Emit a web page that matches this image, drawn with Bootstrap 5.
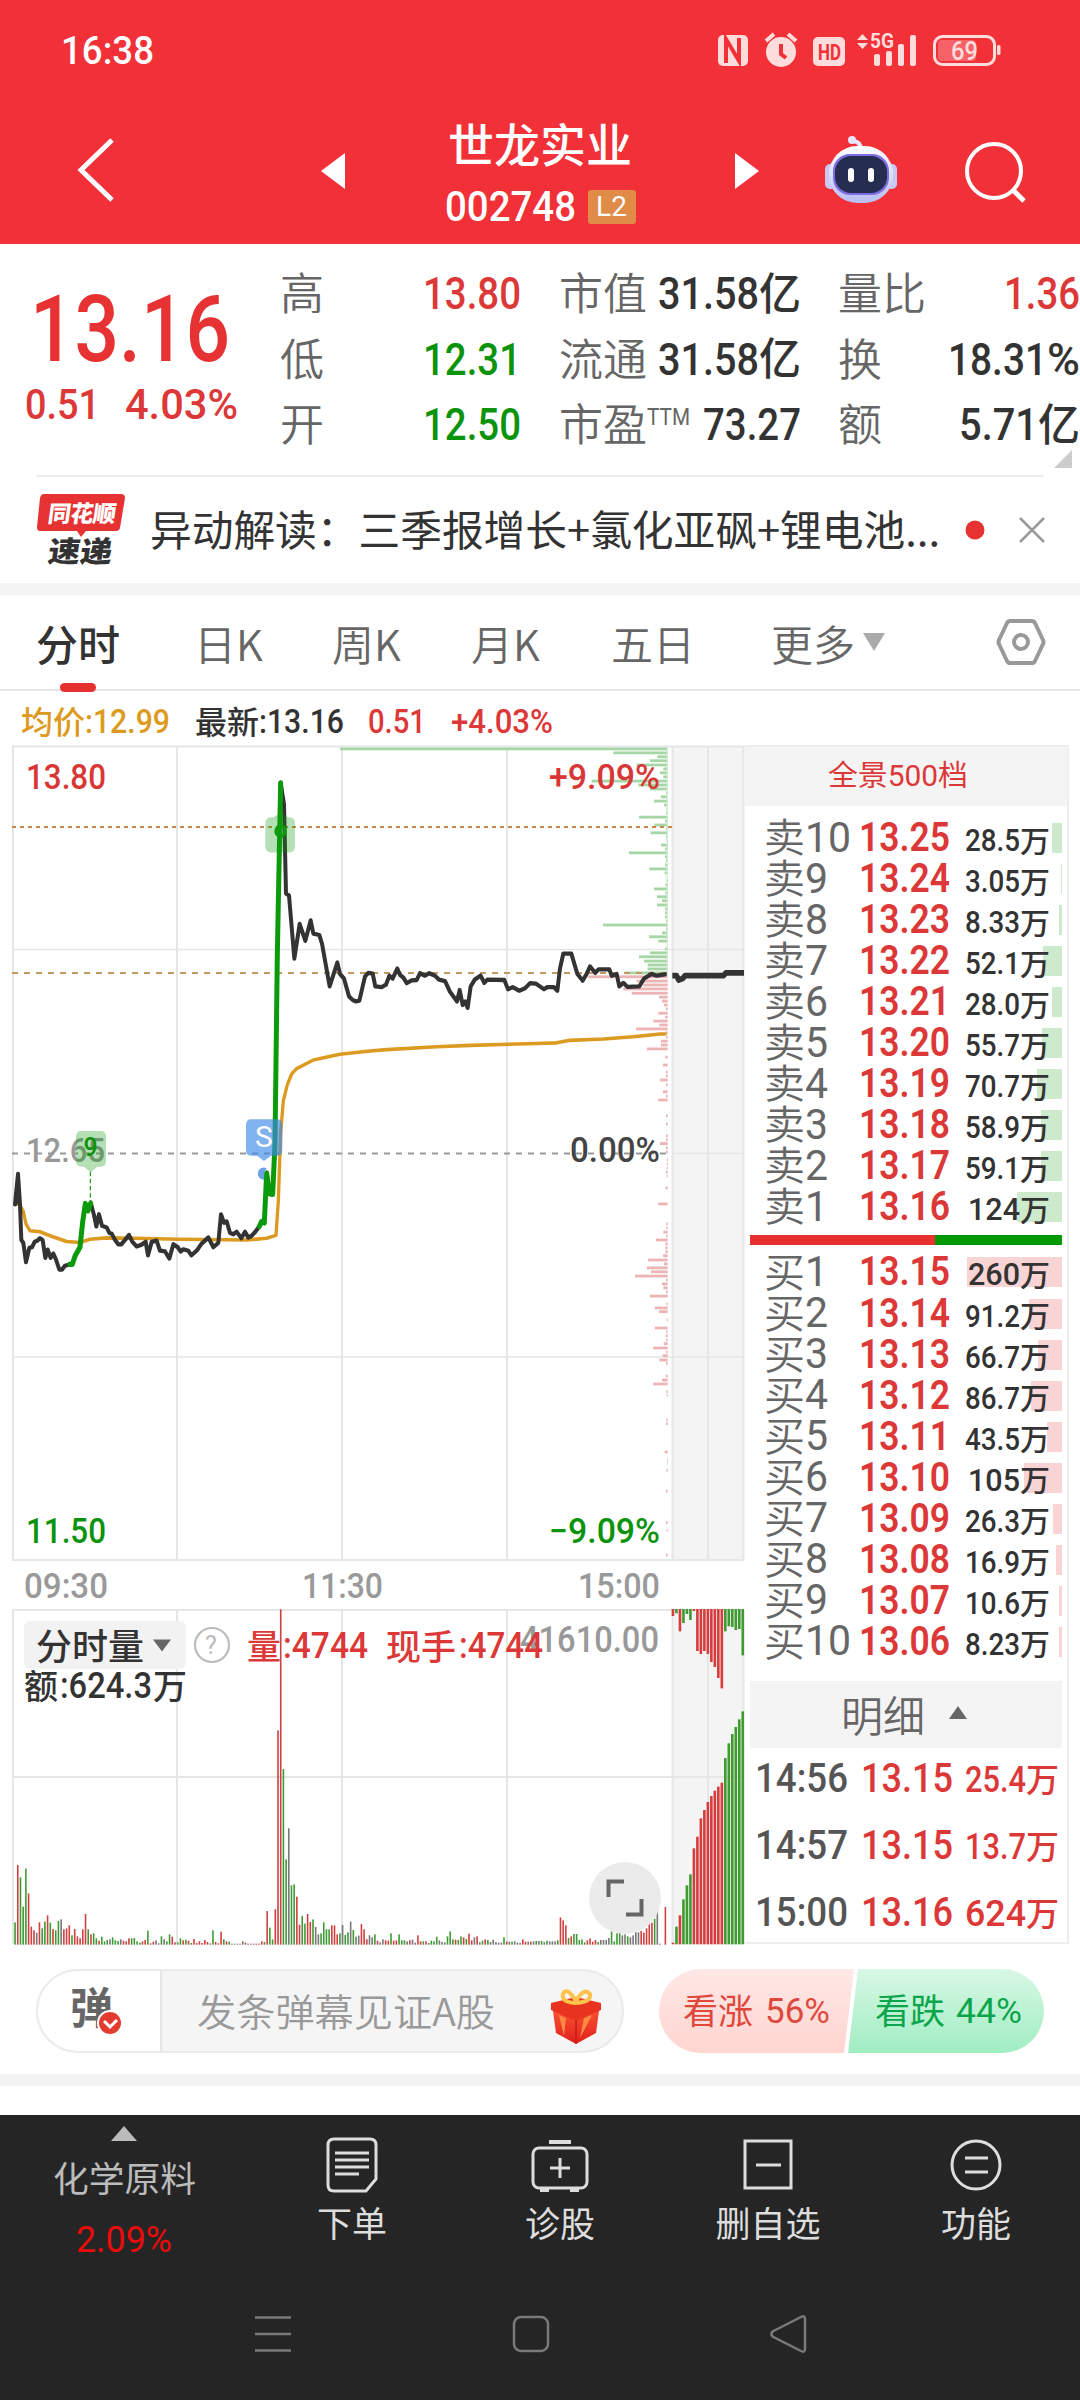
<!DOCTYPE html>
<html lang="zh-CN">
<head>
<meta charset="utf-8">
<meta name="viewport" content="width=device-width, initial-scale=1">
<title>世龙实业 002748</title>
<link rel="stylesheet" href="https://cdn.jsdelivr.net/npm/bootstrap@5.3.0/dist/css/bootstrap.min.css">
<style>
:root{--up:#dc3838;--down:#0b930b;--ink:#333;--mute:#666;--line:#e9e9e9}
body{width:1080px;height:2400px;overflow:hidden;background:#fff;color:var(--ink);font-family:Roboto,"Noto Sans CJK SC",sans-serif;line-height:1}
svg{display:block;flex:none;overflow:visible}
.cjk{font-family:"Noto Sans CJK SC",sans-serif;line-height:1}
.fit{display:inline-block;white-space:nowrap;transform-origin:0 50%;flex:none}
.num{font-family:Roboto,sans-serif;font-weight:500;line-height:1}
.up{color:var(--up)}.down{color:var(--down)}.mute{color:var(--mute)}
.topbar{height:244px;background:#f13037;color:#fff}
.statusbar{height:101px;padding:0 78px 0 61px}
.titlebar{height:143px;padding:0 54px 0 76px}
.lv{width:48px;height:34px;background:#e08c48;border-radius:3px;font-size:28px;margin-left:12px}
.quote{height:231px;padding-left:24px}
.quote-main{width:214px;padding-top:40px;margin-right:42px}
.quote-row{height:65.5px}
.quote-row .cjk{font-size:44px;font-weight:350;margin-top:-5px}
.quote-row .num{font-size:45px}
.corner{right:8px;top:206px}
.news{height:108px;margin:0 36px;border-top:2px solid #ececec}
.band{height:12px;background:#f4f4f4}
.tabs{height:96px;border-bottom:2px solid #e6e6e6;padding:0 34px 0 36px}
.tabs .cjk{font-size:42px;font-weight:350;color:var(--mute);margin-top:1px}
.tabs .chosen{font-weight:500;color:var(--ink)}
.tabmark{width:36px;height:9px;border-radius:5px;background:#e63030;left:24px;bottom:-28px}
.info{height:49px;padding:11px 0 0 21px;font-size:34px}
.info .cjk{font-size:32px;font-weight:500;margin-top:-3px}
.board{height:1206px}
.chart{width:745px}
.book{width:324px;height:1199px;margin-top:5px;border:2px solid #eee;border-left:0}
.book-head{height:59px;background:#f4f4f4}
.level{height:41.05px;padding-left:19px;padding-right:9px}
.level .lab{width:95px;font-size:42px;color:var(--mute)}
.level .price{width:101px}
.level .price .num{font-weight:600}
.level .vol{width:90px;justify-content:flex-end;z-index:1}
.depthbar{right:5px;top:6px;height:30px}
.sellbar{background:#cdeacc}.buybar{background:#f9d4d4}
.powerbar{height:10px;margin:8px 5px 6px}
.detail-head{height:67px;background:#f4f4f4;margin:19px 5px 0}
.tick{height:67px;padding-left:10px}
.talk{height:128px;padding:23px 35px 0 36px}
.talkbox{width:588px;height:84px;border:2px solid #eaeaea;border-radius:42px;background:#f5f5f5}
.talkmode{width:124px;background:#fff;border-right:2px solid #e6e6e6}
.bottom{height:285px;background:#252525;color:#ddd}
.toolcell{width:208px}
.toolcell .cjk{font-size:35px}
</style>
<script src="https://cdn.jsdelivr.net/npm/bootstrap@5.3.0/dist/js/bootstrap.bundle.min.js"></script>
</head>
<body>
<header class="topbar">
  <div class="statusbar d-flex justify-content-between align-items-center">
    <span class="num fit" data-w="93" style="font-size:38px">16:38</span>
    <svg width="287" height="40" viewBox="715 31 287 40" fill="#ffdcdc">
      <rect x="718" y="35" width="30" height="31" rx="5"/>
      <path d="M726 63V39l13 22V38" fill="none" stroke="#f13037" stroke-width="4"/>
      <circle cx="781" cy="52" r="15"/><path d="M766 41l8-7M796 41l-8-7" stroke="#ffdcdc" stroke-width="4"/><path d="M781 44v10l5 4" fill="none" stroke="#f13037" stroke-width="4"/>
      <rect x="813" y="37" width="32" height="29" rx="5"/>
      <text x="818" y="60" font-family="Roboto" font-weight="700" font-size="22" fill="#f13037" textLength="23" lengthAdjust="spacingAndGlyphs">HD</text>
      <path d="M857 40l5.500-6 5.500 6zM857 43h11l-5.500 6z"/>
      <text x="870" y="48" font-family="Roboto" font-weight="700" font-size="20" textLength="24" lengthAdjust="spacingAndGlyphs">5G</text>
      <rect x="874" y="54" width="6" height="12" rx="2"/><rect x="886" y="51" width="6" height="15" rx="2"/><rect x="898" y="44" width="6" height="22" rx="2"/><rect x="910" y="35" width="6" height="31" rx="2"/>
      <rect x="934.500" y="36.500" width="60" height="28" rx="8" fill="none" stroke="#ffdcdc" stroke-width="3"/><rect x="938" y="40" width="38" height="21" rx="4" opacity=".3"/><rect x="997" y="45" width="3.500" height="10" rx="1.500"/>
      <text x="951" y="60" font-family="Roboto" font-weight="500" font-size="25" textLength="27" lengthAdjust="spacingAndGlyphs">69</text>
    </svg>
  </div>
  <div class="titlebar d-flex align-items-center">
    <svg width="40" height="70" viewBox="0 0 40 70" fill="none" stroke="#fff" stroke-width="5" style="margin-top:-6px"><path d="M36 5L5 35l31 30"/></svg>
    <div class="d-flex align-items-center" style="margin-left:205px">
      <svg width="24" height="36" viewBox="0 0 24 36" fill="#fff" style="margin-top:-3px"><path d="M24 0v36L0 18z"/></svg>
      <div class="d-flex flex-column align-items-center" style="width:390px">
        <span class="cjk" style="font-size:46px;font-weight:500;margin-top:2px">世龙实业</span>
        <div class="d-flex align-items-center" style="margin-top:21px"><span class="num fit" data-w="131" style="font-size:42px">002748</span><span class="lv d-flex align-items-center justify-content-center">L2</span></div>
      </div>
      <svg width="24" height="36" viewBox="0 0 24 36" fill="#fff" style="margin-top:-3px"><path d="M0 0v36l24-18z"/></svg>
    </div>
    <svg width="76" height="76" viewBox="823 132 76 76" style="margin:-4px 0 0 64px">
      <defs><linearGradient id="bot" x2="0" y2="1"><stop stop-color="#fff"/><stop offset="1" stop-color="#b9bdf0"/></linearGradient></defs>
      <path d="M861 148q0-7-8-8" fill="none" stroke="#e8e6fa" stroke-width="4"/><circle cx="852" cy="139" r="4" fill="#e8e6fa"/>
      <rect x="825" y="163" width="12" height="25" rx="5" fill="#c9c8f3"/><rect x="885" y="163" width="12" height="25" rx="5" fill="#c9c8f3"/>
      <rect x="829" y="145" width="64" height="57" rx="28" fill="url(#bot)"/>
      <rect x="833" y="153" width="56" height="41" rx="17" fill="#7d6de0"/><rect x="835" y="155" width="52" height="37" rx="16" fill="#252d50"/>
      <rect x="848" y="167" width="6" height="14" rx="3" fill="#fff"/><rect x="868" y="167" width="6" height="14" rx="3" fill="#fff"/>
    </svg>
    <svg class="ms-auto" width="62" height="62" viewBox="964 141 62 62" fill="none" stroke="#fff" stroke-width="4" style="margin-top:-2px"><circle cx="994" cy="171" r="27"/><path d="M1013 190l11 11" stroke-width="5"/></svg>
  </div>
</header>

<section class="quote d-flex position-relative">
  <div class="quote-main">
    <div style="padding-left:6px"><span class="num fit" data-w="200" style="font-size:92px;color:#e63232">13.16</span></div>
    <div class="d-flex justify-content-between" style="padding:7px 0 0 1px"><span class="num up fit" data-w="75" style="font-size:43px">0.51</span><span class="num up fit" data-w="113" style="font-size:43px">4.03%</span></div>
  </div>
  <div style="width:279px;padding-top:17px" class="q" data-col="0"></div>
  <div style="width:279px;padding-top:17px" class="q" data-col="1"></div>
  <div style="width:242px;padding-top:17px" class="q" data-col="2"></div>
  <svg class="position-absolute corner" width="18" height="18"><path d="M18 0v18H0z" fill="#ccc"/></svg>
</section>

<section class="news d-flex align-items-center">
  <svg width="90" height="80" viewBox="36 489 90 80" font-family="Noto Sans CJK SC" font-weight="900">
    <path d="M44 493h77q4 0 4 4l-5 30q-1 3-4 3H86l-5 6-4-6H40q-3 0-3-4l3-29q1-4 4-4z" fill="#e63232"/>
    <g transform="translate(47 521) skewX(-8)"><text font-size="23" fill="#fff" textLength="68">同花顺</text></g>
    <g transform="translate(47 561) skewX(-8)"><text font-size="29" fill="#333" textLength="64" lengthAdjust="spacingAndGlyphs">速递</text></g>
  </svg>
  <span class="cjk fit" data-w="790" style="font-size:42px;margin:-4px 0 0 24px;">异动解读：三季报增长+氯化亚砜+锂电池...</span>
  <svg width="20" height="20" style="margin-left:25px"><circle cx="10" cy="10" r="9.500" fill="#e63232"/></svg>
  <svg width="26" height="26" viewBox="0 0 26 26" stroke="#999" stroke-width="2.500" style="margin-left:34px"><path d="M1 1l24 24M25 1L1 25"/></svg>
</section>
<div class="band"></div>

<nav class="tabs d-flex align-items-center">
  <span class="cjk chosen position-relative" style="width:158px">分时<i class="position-absolute tabmark"></i></span>
  <span class="cjk" style="width:138px">日K</span>
  <span class="cjk" style="width:139px">周K</span>
  <span class="cjk" style="width:140px">月K</span>
  <span class="cjk" style="width:160px">五日</span>
  <span class="cjk">更多</span>
  <svg width="22" height="18" style="margin-left:8px"><path d="M0 0h22L11 18z" fill="#aaa"/></svg>
  <svg class="ms-auto" width="50" height="48" viewBox="0 0 50 48" fill="none" stroke="#999" stroke-width="4"><path d="M14 3h22q2 0 3 2l8 17q1 2 0 4l-8 17q-1 2-3 2H14q-2 0-3-2L3 26q-1-2 0-4l8-17q1-2 3-2z"/><circle cx="25" cy="24" r="7"/></svg>
</nav>

<div class="info d-flex align-items-center">
  <span class="cjk fit" data-w="64" style="color:#dc9b20">均价</span><span class="num fit" data-w="85" style="color:#dc9b20">:12.99</span>
  <span class="cjk fit" data-w="64" style="margin-left:25px">最新</span><span class="num fit" data-w="85">:13.16</span>
  <span class="num up fit" data-w="58" style="margin-left:24px">0.51</span>
  <span class="num up fit" data-w="102" style="margin-left:25px">+4.03%</span>
</div>

<main class="board d-flex">
  <svg class="chart" width="745" height="1206" viewBox="0 740 745 1206" font-family="Roboto,'Noto Sans CJK SC',sans-serif" font-weight="500">
    <rect x="672" y="747" width="72" height="813" fill="#f4f4f4"/><rect x="672" y="1609" width="72" height="335" fill="#f4f4f4"/>
    <g stroke="#e6e6e6" stroke-width="2" fill="none">
      <path d="M12 746.500H744M12 1560H744M13 746V1560M177 746V1560M342 746V1560M507 746V1560M672.500 746V1560M708 746V1560M743.500 746V1560"/>
      <path d="M12 1610H744M12 1777H744M13 1610V1944M177 1610V1944M342 1610V1944M507 1610V1944M672.500 1610V1944M708 1610V1944M743.500 1610V1944"/>
      <path d="M12 949.500H744M12 1357H744M672 1153.500H744" stroke-width="1.300"/>
    </g>
    <g id="depth"></g>
    <path d="M12 827H672" stroke="#cc8844" stroke-width="2" stroke-dasharray="4 4"/>
    <path d="M12 973H664" stroke="#c29a62" stroke-width="2" stroke-dasharray="6 6"/>
    <path d="M12 1153.500H666" stroke="#999" stroke-width="2" stroke-dasharray="6 6"/>
    <text x="26" y="1162" font-size="34" fill="#999" textLength="79" lengthAdjust="spacingAndGlyphs">12.65</text>
    <g transform="translate(0 740) scale(.33333 .35714)" fill="none" stroke-linejoin="round" stroke-linecap="round">
      <path id="avg" stroke="#dc9b20" stroke-width="10" d="M45 1300H58L70 1320 78 1355 90 1374 120 1377 150 1388 200 1404 240 1407 270 1398 320 1394 400 1395 540 1398 740 1400 800 1395 828 1387 835 1290 842 1100 850 1010 862 965 875 935 890 920 940 896 1020 880 1110 871 1160 867 1310 859 1410 855 1610 850 1670 848 1710 841 1810 837 1900 831 1980 823 1995 823"/>
      <path d="M45 1300L54 1215 60 1300z" fill="#333"/>
      <path stroke="#333" stroke-width="12" d="M45 1300L54 1215 60 1300 64 1400 70 1408 78 1462 88 1422 96 1420 104 1405 112 1402 120 1395 128 1400 136 1450 143 1427 152 1450 160 1438 168 1455 178 1483 186 1483 195 1472 210 1468M272 1295L282 1330 289 1362 297 1328 306 1360 320 1365 328 1380 335 1382 345 1400 355 1412 364 1412 375 1400 387 1386 397 1405 410 1418 425 1413 437 1405 444 1443 455 1405 470 1402 480 1430 495 1432 508 1452 520 1412 533 1420 542 1432 550 1426 565 1430 574 1443 590 1430 605 1410 625 1393 640 1420 655 1408 663 1328 672 1352 680 1348 690 1380 700 1384 710 1377 724 1395 735 1377 745 1393 755 1388 765 1378 778 1362M842 120L852 180 858 430 867 435 883 612 899 515 916 562 932 505 940 542 958 546 966 570 989 690 1012 623 1020 655 1032 668 1047 718 1058 728 1068 732 1078 730 1095 662 1105 652 1118 654 1126 690 1145 692 1158 685 1168 660 1178 668 1192 640 1200 658 1210 665 1220 681 1235 673 1250 672 1260 653 1275 660 1288 653 1305 660 1317 671 1335 675 1350 705 1371 732 1379 700 1388 742 1396 732 1403 750 1412 690 1425 670 1442 660 1453 680 1462 671 1513 672 1524 698 1538 692 1558 702 1575 695 1590 681 1607 682 1632 698 1642 692 1662 692 1672 702 1680 640 1690 598 1714 598 1732 655 1748 674 1760 655 1770 634 1786 652 1796 642 1828 642 1835 660 1850 655 1858 690 1870 680 1882 691 1918 690 1932 668 1955 655 1970 660 1995 656"/>
      <path stroke="#333" stroke-width="16" stroke-linecap="butt" d="M2017 660H2030L2036 672 2048 668 2055 660H2170L2178 652H2232"/>
      <rect x="796" y="216" width="89" height="99" rx="16" fill="#09980a" fill-opacity=".3"/><path d="M820 217l22-14 22 14z" fill="#09980a" fill-opacity=".3"/>
      <path stroke="#0b9a0b" stroke-width="15" d="M210 1468H217L225 1445 240 1420 248 1350 256 1298 264 1318 272 1298M778 1362L785 1348 793 1352 800 1212 808 1270 818 1272 825 1130 832 600 842 120"/>
      <circle cx="842" cy="255" r="14" stroke="#0b9a0b" stroke-width="10"/>
      <path d="M271 1210V1292" stroke="#0b9a0b" stroke-width="3.500" stroke-dasharray="10 10"/>
      <path d="M244 1095h58q16 0 16 16v68q0 16-16 16h-10l-20 16-20-16h-8q-16 0-16-16v-68q0-16 16-16z" fill="#09980a" fill-opacity=".3"/>
      <path d="M754 1062h77q16 0 16 16v70q0 16-16 16h-18l-21 15-21-15h-17q-16 0-16-16v-70q0-16 16-16z" fill="#3c88e8" fill-opacity=".65"/>
      <path d="M800 1200A17 17 0 1 0 792 1231V1210z" fill="#69a2e6"/>
    </g>
    <text x="83.500" y="1156" font-size="25" fill="#0b930b">9</text>
    <text x="255" y="1147" font-size="30" fill="#fff" font-weight="400">S</text>
    <g font-size="35">
      <text x="26" y="789" fill="#d93636" textLength="80" lengthAdjust="spacingAndGlyphs">13.80</text>
      <text x="549" y="789" fill="#d93636" textLength="111" lengthAdjust="spacingAndGlyphs">+9.09%</text>
      <text x="570" y="1162" fill="#444" textLength="90" lengthAdjust="spacingAndGlyphs">0.00%</text>
      <text x="26" y="1543" fill="#0b930b" textLength="80" lengthAdjust="spacingAndGlyphs">11.50</text>
      <text x="549" y="1543" fill="#0b930b" textLength="111" lengthAdjust="spacingAndGlyphs">−9.09%</text>
      <text x="24" y="1598" fill="#999" textLength="84" lengthAdjust="spacingAndGlyphs">09:30</text>
      <text x="302" y="1598" fill="#999" textLength="81" lengthAdjust="spacingAndGlyphs">11:30</text>
      <text x="578" y="1598" fill="#999" textLength="82" lengthAdjust="spacingAndGlyphs">15:00</text>
    </g>
    <g id="vol"></g>
    <rect x="24" y="1621" width="162" height="48" rx="6" fill="#f2f2f2"/>
    <text x="36" y="1660" font-size="36" fill="#333" textLength="108">分时量</text><path d="M153 1639.500h18l-9 12z" fill="#666"/>
    <circle cx="212" cy="1645" r="17" fill="none" stroke="#bbb" stroke-width="2.200"/><text x="205" y="1654" font-size="25" font-weight="400" fill="#bbb">?</text>
    <g font-size="36" fill="#dc3838"><text x="247" y="1659" font-size="34">量</text><text x="283" y="1658" textLength="85" lengthAdjust="spacingAndGlyphs">:4744</text></g>
    <text x="520" y="1652" font-size="36" fill="#999" textLength="139" lengthAdjust="spacingAndGlyphs">41610.00</text>
    <g font-size="36" fill="#dc3838"><text x="386" y="1660" font-size="35">现手</text><text x="459" y="1658" textLength="84" lengthAdjust="spacingAndGlyphs">:4744</text></g>
    <g font-size="36" fill="#333"><text x="24" y="1699" font-size="34">额</text><text x="60" y="1698" textLength="92" lengthAdjust="spacingAndGlyphs">:624.3</text><text x="153" y="1699" font-size="34">万</text></g>
    <circle cx="625" cy="1898" r="36" fill="#ebebeb"/>
    <path d="M608.500 1897V1881.500H624M641.500 1899V1914.500H626" fill="none" stroke="#666" stroke-width="4"/>
  </svg>

  <aside class="book">
    <div class="book-head d-flex align-items-center justify-content-center"><span class="fit up" data-w="140" style="font-size:29px;margin-right:16px">全景500档</span></div>
    <div id="sells" style="padding-top:11px"></div>
    <div class="powerbar d-flex"><div style="width:185px;background:#e83030"></div><div class="flex-fill" style="background:#009a00"></div></div>
    <div id="buys"></div>
    <div class="detail-head d-flex align-items-center justify-content-center"><span class="cjk mute" style="font-size:42px;font-weight:350;margin:-1px 0 0 -4px">明细</span><svg width="18" height="13" style="margin:-4px 0 0 24px"><path d="M0 13h18L9 0z" fill="#666"/></svg></div>
    <div id="ticks" style="margin-top:-3px"></div>
  </aside>
</main>

<section class="talk d-flex justify-content-between">
  <div class="talkbox d-flex align-items-center overflow-hidden">
    <div class="talkmode h-100 d-flex align-items-center justify-content-center">
      <svg width="60" height="56" viewBox="70 1982 60 56"><text x="71" y="2023" font-family="Noto Sans CJK SC" font-weight="700" font-size="43" fill="#666">弹</text><circle cx="111" cy="2022" r="12" fill="#e43b30" stroke="#fff" stroke-width="2"/><path d="M105 2020l6 6 7-7" fill="none" stroke="#fff" stroke-width="3"/></svg>
    </div>
    <span class="cjk fit" data-w="298" style="font-size:38px;font-weight:350;color:#999;margin:-2px 0 0 35px">发条弹幕见证A股</span>
    <svg width="56" height="60" viewBox="548 1988 56 60" style="margin:9px 0 0 53px">
      <defs><linearGradient id="box" x2="0" y2="1"><stop stop-color="#ff5a35"/><stop offset="1" stop-color="#e0201c"/></linearGradient></defs>
      <path d="M552 2006l24 10v30l-20-11zM600 2006l-24 10v30l20-11z" fill="url(#box)"/><path d="M551 2005l25-6 25 6v7l-25 11-25-11z" fill="#e8331f"/><path d="M576 2022v24" stroke="#c41c18" stroke-width="1.500"/><path d="M559 2017l7 3-2 18zM592 2017l-8 3-4 20z" fill="#ff8a45"/>
      <path d="M575 2005q-14-1-12-9 4-8 13 7 8-14 14-7 2 8-15 9z" fill="none" stroke="#ffc24a" stroke-width="4"/>
    </svg>
  </div>
  <svg width="386" height="84" viewBox="660 1969 386 84">
    <defs><linearGradient id="bull" x2="0" y2="1"><stop stop-color="#ffe8e6"/><stop offset="1" stop-color="#ffd5d0"/></linearGradient><linearGradient id="bear" x2="0" y2="1"><stop stop-color="#d8f8e5"/><stop offset="1" stop-color="#a0edc2"/></linearGradient></defs>
    <path d="M702 1969H855L845 2053H702A42 42 0 0 1 702 1969z" fill="url(#bull)"/><path d="M859 1969H1003A42 42 0 0 1 1003 2053H849z" fill="url(#bear)"/>
    <g font-family="Roboto,'Noto Sans CJK SC'" font-size="35"><g fill="#e0483c"><text x="684" y="2024">看涨</text><text x="766" y="2023" textLength="65" lengthAdjust="spacingAndGlyphs">56%</text></g><g fill="#0da54c"><text x="876" y="2024">看跌</text><text x="957" y="2023" textLength="66" lengthAdjust="spacingAndGlyphs">44%</text></g></g>
  </svg>
</section>
<div class="band"></div>
<div style="height:29px"></div>

<footer class="bottom">
  <div class="d-flex" style="height:145px">
    <div class="toolcell d-flex flex-column align-items-center" style="width:248px;padding-top:11px">
      <svg width="26" height="15"><path d="M0 15h26L13 0z" fill="#bbb"/></svg>
      <span class="cjk fit" data-w="143" style="color:#bbb;margin-top:18px">化学原料</span>
      <span class="fit" data-w="96" style="font-size:37px;color:#e80c0c;margin-top:27px">2.09%</span>
    </div>
    <div class="toolcell d-flex flex-column align-items-center" style="padding-top:22px">
      <svg width="52" height="56" viewBox="0 0 52 56" fill="none" stroke="#ddd" stroke-width="3"><path d="M8 2h36q6 0 6 6v34L40 54H8q-6 0-6-6V8q0-6 6-6z"/><path d="M9 16h34M9 23h34M9 30h34M9 37h24"/></svg>
      <span class="cjk" style="margin-top:11px">下单</span>
    </div>
    <div class="toolcell d-flex flex-column align-items-center" style="padding-top:22px">
      <svg width="60" height="56" viewBox="0 0 60 56" fill="none" stroke="#ddd" stroke-width="3"><path d="M19 5h22M10 53h9M40 53h9" stroke-width="4"/><rect x="3" y="11" width="54" height="40" rx="6"/><path d="M20 31h20M30 21v20"/></svg>
      <span class="cjk" style="margin-top:11px">诊股</span>
    </div>
    <div class="toolcell d-flex flex-column align-items-center" style="padding-top:22px">
      <svg width="52" height="56" viewBox="0 0 52 56" fill="none" stroke="#ddd" stroke-width="3"><rect x="3" y="4" width="46" height="47"/><path d="M14 28h25"/></svg>
      <span class="cjk" style="margin-top:11px">删自选</span>
    </div>
    <div class="toolcell d-flex flex-column align-items-center" style="padding-top:22px">
      <svg width="52" height="56" viewBox="0 0 52 56" fill="none" stroke="#ddd" stroke-width="3"><circle cx="26" cy="28" r="24"/><path d="M15 21h23M15 35h23"/></svg>
      <span class="cjk" style="margin-top:11px">功能</span>
    </div>
  </div>
  <svg width="1080" height="110" viewBox="0 2260 1080 110" fill="none" stroke="#7a7a7a" stroke-width="2.500"><path d="M255 2317.500h36M255 2334h36M255 2350.500h36"/><rect x="514" y="2317" width="34" height="34" rx="7"/><path d="M772.500 2331.500L801 2317q4-2 4 2v30q0 4-4 2l-28.500-14.500q-2-2.500 0-5z"/></svg>
</footer>

<script>
const quote=[
 [['高',241,'13.80',98,'up'],['低',241,'12.31',98,'down'],['开',241,'12.50',98,'down']],
 [['市值',242,'31.58',101,'','亿'],['流通',242,'31.58',101,'','亿'],['市盈',242,'73.27',98,'','','TTM']],
 [['量比',242,'1.36',76,'up'],['换',242,'18.31',99,'','%'],['额',242,'5.71',79,'','亿']]];
document.querySelectorAll('.q').forEach(col=>{
  col.innerHTML=quote[col.dataset.col].map(([l,w,v,vw,c,u,sup])=>`<div class="quote-row d-flex align-items-center" style="width:${w}px"><span class="cjk mute">${l}</span>${sup?`<span class="fit mute" data-w="43" style="font-size:24px;margin-top:-15px">${sup}</span>`:''}<span class="num fit ms-auto ${c}" data-w="${vw}">${v}</span>${u==='%'?'<span class="num fit" data-w="33">%</span>':u?`<span class="cjk fit" data-w="42" style="font-weight:500;margin-top:-6px">${u}</span>`:''}</div>`).join('')});

const sells=[['13.25','28.5',10],['13.24','3.05',1],['13.23','8.33',3],['13.22','52.1',19],['13.21','28.0',10],['13.20','55.7',20],['13.19','70.7',25],['13.18','58.9',21],['13.17','59.1',21],['13.16','124',45]];
const buys=[['13.15','260',95],['13.14','91.2',33],['13.13','66.7',24],['13.12','86.7',31],['13.11','43.5',15],['13.10','105',38],['13.09','26.3',9],['13.08','16.9',6],['13.07','10.6',3],['13.06','8.23',3]];
const level=(name,n,[p,v,w],cls)=>`<div class="level d-flex align-items-center position-relative"><span class="lab d-flex align-items-center"><span class="cjk fit" data-w="41" style="font-size:40px;font-weight:350;margin-top:-5px">${name}</span><span class="fit" data-w="${n>9?46:23}">${n}</span></span><span class="price"><span class="num fit up" data-w="91" style="font-size:41px">${p}</span></span><i class="position-absolute depthbar ${cls}" style="width:${w}px"></i><span class="vol d-flex align-items-center"><span class="num fit" data-w="${v.length>3?55:52}" style="font-size:32px;margin-top:5px">${v}</span><span class="cjk fit" data-w="30" style="font-size:30px;font-weight:500;margin-top:2px">万</span></span></div>`;
document.getElementById('sells').innerHTML=sells.map((r,i)=>level('卖',10-i,r,'sellbar')).join('');
document.getElementById('buys').innerHTML=buys.map((r,i)=>level('买',i+1,r,'buybar')).join('');
document.getElementById('ticks').innerHTML=[['14:56','13.15','25.4'],['14:57','13.15','13.7'],['15:00','13.16','624']].map(([t,p,v])=>`<div class="tick d-flex align-items-center"><span class="num fit" data-w="93" style="font-size:41px;color:#555">${t}</span><span class="num fit up" data-w="92" style="font-size:41px;margin-left:13px">${p}</span><span class="num fit up" data-w="61" style="font-size:36px;margin:3px 0 0 12px">${v}</span><span class="cjk fit up" data-w="33" style="font-size:33px;font-weight:500">万</span></div>`).join('');

document.querySelectorAll('.fit').forEach(e=>{const n=e.getBoundingClientRect().width,w=+e.dataset.w;e.style.width=w+'px';e.style.transform=`scaleX(${w/n})`});

/* order depth along the price axis: offset,left edge */
const third=n=>n/3;
const asks='25,-90 36,730 47,862 58,840 70,800 81,880 92,870 103,880 115,665 126,805 137,840 148,888 159,873 171,852 182,882 193,890 204,888 216,807 227,885 238,853 249,888 260,842 271,888 282,890 294,873 305,885 316,777 327,885 338,888 350,885 361,838 372,884 395,890 406,886 417,852 428,886 439,861 450,876 462,861 473,885 484,885 495,885 507,888 518,699 529,888 540,876 551,837 563,865 585,885 596,840 607,807 619,822 630,833 641,833 652,765';
const bids='663,655 675,800 686,820 697,760 709,785 720,867 731,876 742,882 753,888 765,865 776,885 787,850 798,868 809,798 820,885 832,888 843,873 854,873 865,831 888,886 910,879 930,888 941,888 952,870 965,888 985,879 997,888 1008,865 1052,888 1075,888 1108,888 1119,888 1130,870 1142,888 1153,888 1175,890 1187,890 1198,890 1210,888 1221,890 1254,886 1299,865 1355,889 1366,889 1378,880 1389,889 1400,858 1411,886 1422,886 1433,886 1444,879 1456,834 1467,882 1478,831 1489,843 1501,795 1512,888 1523,876 1534,880 1545,888 1557,840';
const lowBids='1692,889 1704,854 1715,867 1740,890 1764,854 1775,889 1787,887 1800,889 1811,881 1824,850 1836,889 1847,878 1860,868 1870,888 1908,887 1920,876 1932,850 1955,889 1966,890 2040,889 2051,888 2136,884 2160,891 2170,891 2191,889 2253,888 2348,888 2371,890 2445,888';
const hbar=(s,c,k)=>s.split(' ').map(p=>{const[y,x]=p.split(',');return`<rect x="${370+third(x)}" y="${740+y/k-1.4}" width="${third(893-x)}" height="2.8" fill="${c}"/>`}).join('');
document.getElementById('depth').innerHTML=hbar(asks,'#a6d5a6',2.8)+hbar(bids,'#ecb4b4',2.8)+hbar(lowBids,'#ecb4b4',3)+`<rect x="666.500" y="748" width="1.2" height="225" fill="#cdeacd"/>`;

/* minute turnover: top edge and direction */
const minutes='967g 795r 832g 920g 806g 880r 980r 991r 998x 967r 985g 965g 946r 968g 987r 991g 963g 958x 988r 985r 976r 1006g 987r 1009r 1015r 988r 942r 988g 1003r 1000g 1015g 1022r 1010g 1024g 1020g 1018x 1012g 1021g 1023g 1018x 1022r 1024r 1015r 1015g 1014g 1024g 1028g 1024r 1020r 992g 1030r 1025r 1021x 1030x 1009g 1018x 1024g 1003g 1010r 1027r 1027g 1015g 1021r 1019g 1022r 1029g 1017r 1029r 1024r 1029r 1020r 1026r 1030x 991g 1026r 1030r 995r 1018g 1024r 1025g 1031x 1031x 1031x 1031x 1024x 1028r 1031x 1031x 1031r 1031r 1031r 1024r 1026g 933r 983g 1018g 928r 391r 28r 507g 778g 685x 856g 853g 890r 974r 948g 971g 942r 966r 958g 981x 1003x 1000g 967g 988g 988g 976r 976r 1003r 1000g 975x 1005g 997g 965x 990g 1010x 1007x 972r 988r 1018r 1006x 1012x 1003g 1022r 1027x 1018x 1021r 1022r 1000g 1022r 1021r 1003g 1021g 1021g 1024x 1021r 1019x 1028x 1006r 1024r 1024g 1024r 1029x 1022g 1024g 1010g 1021x 1026x 1027x 1009g 994g 1018g 1019r 1020g 1009g 1012r 1017g 1001r 1021r 1012x 1009r 1027x 1022g 1018r 1020g 1026x 1019x 1026x 1028x 1028x 1012g 1025r 1025x 1025g 1024x 1028x 1029x 1018r 1025r 1025x 1025r 1024x 1023g 1023x 1023g 1026x 1022g 1024x 1024x 1024x 1021g 952r 961r 976r 1014g 1009r 1002g 1002g 1020g 1018g 1027g 1021r 1015r 1025r 1020r 1026g 1020x 1020x 1020x 1014x 994g 1024g 1000g 992g 1006x 1003x 1009g 1012x 1006x 997x 997x 993r 998r 985r 972r 968r 956g 928x 1031x 1034x 921r'.split(' ');
const tint={r:'#d04040',g:'#3f9a35',x:'#777'},spike=minutes.indexOf('28r'),last=minutes.length-1;
/* morning and afternoon halves share the peak minute as their anchor */
const slot=i=>i<=spike?45+i*797/spike:842+(i-spike)*1154/(last-spike);
let out=minutes.map((m,i)=>{const t=parseInt(m),x=slot(i)/3;return`<rect x="${x-.75}" y="${1600+t/3}" width="1.6" height="${(1034-t)/3}" fill="${tint[m.slice(-1)]}"/>`}).join('');
const lows='1028r 980g 946r 898g 856g 823g 745r 710r 655r 630r 606r 588r 572r 560r 548r 474g 430g 402g 381g 358g 334g'.split(' ');
const highs='48r 40g 94r 69g 42g 60g 33r 153r 162r 153r 162r 186r 201r 234r 265r 94g 79g 81g 90g 87g 166g'.split(' ');
const tone={r:'#d63c3c',g:'#3f9a30'};
lows.forEach((m,i)=>{const t=parseInt(m),x=370+(905+i*10.47)/3,h=parseInt(highs[i]);
 out+=`<rect x="${x}" y="${1600+t/3}" width="2.6" height="${(1033-t)/3}" fill="${tone[m.slice(-1)]}"/><rect x="${x}" y="1609" width="2.6" height="${(h-27)/3}" fill="${tone[highs[i].slice(-1)]}"/>`});
document.getElementById('vol').innerHTML=out;
</script>
</body>
</html>
